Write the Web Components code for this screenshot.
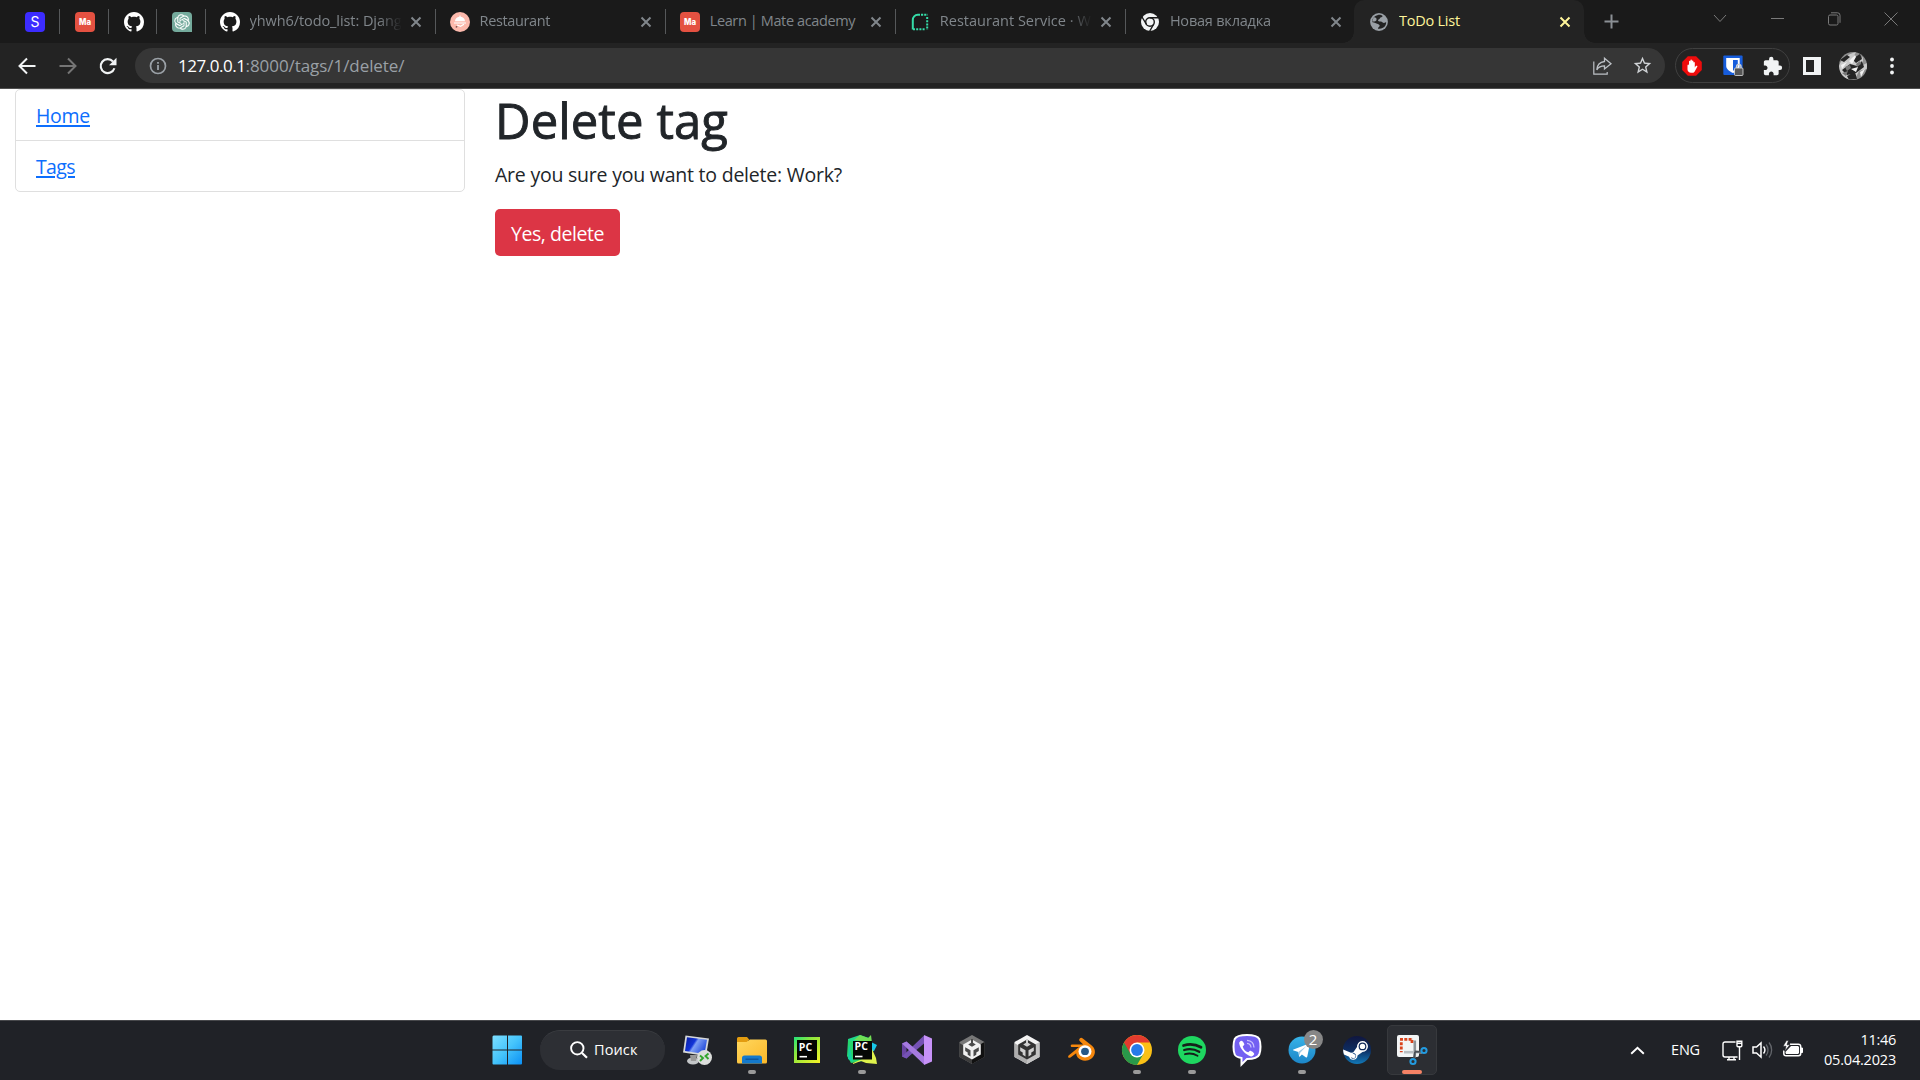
<!DOCTYPE html>
<html lang="ru">
<head>
<meta charset="utf-8">
<title>ToDo List</title>
<style>
html,body{margin:0;height:100%;overflow:hidden;background:#fff}
body{font-family:"Open Sans","Noto Sans",sans-serif}
</style>
</head>
<body>
<desktop-screen>
  <tab-strip slot="tabs">
    <browser-tab pinned icon="s" style="width:50px"></browser-tab>
    <browser-tab pinned icon="mate" style="width:49px"></browser-tab>
    <browser-tab pinned icon="github" style="width:48px"></browser-tab>
    <browser-tab pinned icon="openai" style="width:49px"></browser-tab>
    <browser-tab icon="github"><ui-text w="152" size="14.5">yhwh6/todo_list: Djang</ui-text></browser-tab>
    <browser-tab icon="restaurant"><ui-text w="70.5" size="14.5">Restaurant</ui-text></browser-tab>
    <browser-tab icon="mate"><ui-text w="145.5" size="14.5">Learn | Mate academy</ui-text></browser-tab>
    <browser-tab icon="service"><ui-text w="151" size="14.5">Restaurant Service · W</ui-text></browser-tab>
    <browser-tab icon="chromeTab" nosep><ui-text w="101" size="14.5">Новая вкладка</ui-text></browser-tab>
    <browser-tab active icon="globe"><ui-text w="61" size="14.5">ToDo List</ui-text></browser-tab>
  </tab-strip>
  <address-bar slot="toolbar"></address-bar>
  <web-page slot="page"></web-page>
  <task-bar slot="taskbar"></task-bar>
</desktop-screen>

<script>
const svg = (w, h, body, vb) => `<svg width="${w}" height="${h}" viewBox="${vb || `0 0 ${w} ${h}`}" fill="none">${body}</svg>`;
const OCTO = 'M8 0C3.58 0 0 3.58 0 8c0 3.54 2.29 6.53 5.47 7.59.4.07.55-.17.55-.38 0-.19-.01-.82-.01-1.49-2.01.37-2.53-.49-2.69-.94-.09-.23-.48-.94-.82-1.13-.28-.15-.68-.52-.01-.53.63-.01 1.08.58 1.23.82.72 1.21 1.87.87 2.33.66.07-.52.28-.87.51-1.07-1.78-.2-3.64-.89-3.64-3.95 0-.87.31-1.59.82-2.15-.08-.2-.36-1.02.08-2.12 0 0 .67-.21 2.2.82.64-.18 1.32-.27 2-.27.68 0 1.36.09 2 .27 1.53-1.04 2.2-.82 2.2-.82.44 1.1.16 1.92.08 2.12.51.56.82 1.27.82 2.15 0 3.07-1.87 3.75-3.65 3.95.29.25.54.73.54 1.48 0 1.07-.01 1.93-.01 2.2 0 .21.15.46.55.38A8.013 8.013 0 0016 8c0-4.42-3.58-8-8-8z';
const KNOT = 'M22.2819 9.8211a5.9847 5.9847 0 0 0-.5157-4.9108 6.0462 6.0462 0 0 0-6.5098-2.9A6.0651 6.0651 0 0 0 4.9807 4.1818a5.9847 5.9847 0 0 0-3.9977 2.9 6.0462 6.0462 0 0 0 .7427 7.0966 5.98 5.98 0 0 0 .511 4.9107 6.051 6.051 0 0 0 6.5146 2.9001A5.9847 5.9847 0 0 0 13.2599 24a6.0557 6.0557 0 0 0 5.7718-4.2058 5.9894 5.9894 0 0 0 3.9977-2.9001 6.0557 6.0557 0 0 0-.7475-7.0729zm-9.022 12.6081a4.4755 4.4755 0 0 1-2.8764-1.0408l.1419-.0804 4.7783-2.7582a.7948.7948 0 0 0 .3927-.6813v-6.7369l2.02 1.1686a.071.071 0 0 1 .038.052v5.5826a4.504 4.504 0 0 1-4.4945 4.4944zm-9.6607-4.1254a4.4708 4.4708 0 0 1-.5346-3.0137l.142.0852 4.783 2.7582a.7712.7712 0 0 0 .7806 0l5.8428-3.3685v2.3324a.0804.0804 0 0 1-.0332.0615L9.74 19.9502a4.4992 4.4992 0 0 1-6.1408-1.6464zM2.3408 7.8956a4.485 4.485 0 0 1 2.3655-1.9728V11.6a.7664.7664 0 0 0 .3879.6765l5.8144 3.3543-2.0201 1.1685a.0757.0757 0 0 1-.071 0l-4.8303-2.7865A4.504 4.504 0 0 1 2.3408 7.872zm16.5963 3.8558L13.1038 8.364 15.1192 7.2a.0757.0757 0 0 1 .071 0l4.8303 2.7913a4.4944 4.4944 0 0 1-.6765 8.1042v-5.6772a.79.79 0 0 0-.407-.667zm2.0107-3.0231l-.142-.0852-4.7735-2.7818a.7759.7759 0 0 0-.7854 0L9.409 9.2297V6.8974a.0662.0662 0 0 1 .0284-.0615l4.8303-2.7866a4.4992 4.4992 0 0 1 6.6802 4.66zM8.3065 12.863l-2.02-1.1638a.0804.0804 0 0 1-.038-.0567V6.0742a4.4992 4.4992 0 0 1 7.3757-3.4537l-.142.0805L8.704 5.459a.7948.7948 0 0 0-.3927.6813zm1.0976-2.3654l2.602-1.4998 2.6069 1.4998v2.9994l-2.5974 1.4997-2.6067-1.4997Z';
/* Hexagonal cube mark: top, right and left hull faces, then the inner cube with its panels and notches. */
const cube = (a, b, c, line, face) => `
  <path d="M15 1 27.500 8v15L15 30 2.500 23V8z" fill="${a}"/><path d="M15 15 27.500 8v15L15 30z" fill="${b}"/><path d="M15 17 2.500 9v14l12.500 7z" fill="${c}"/>
  <path d="M15 5.500 23.800 10.500v10L15 25.500l-8.800-5v-10z" fill="${line}"/>
  <path d="M14 5h2v3.800l2.800 1.700L15 12.700l-3.800-2.200L14 8.800z" fill="${face}"/>
  <path d="M8.200 13.300 13.500 16.200v6.200l-2.800-1.600v-2.400l-2.500-1.400zM21.800 13.300 16.500 16.200v6.200l2.800-1.600v-2.400l2.500-1.400z" fill="${face}"/>`;

const ICONS = {
  s: svg(20,20,`<rect width="20" height="20" rx="4" fill="#3c2cff"/><text x="10" y="15" text-anchor="middle" font-family="Inter,sans-serif" font-size="14" fill="#fff">S</text>`),
  mate: svg(20,20,`<rect width="20" height="20" rx="4" fill="#e45141"/><text x="4" y="13.200" textLength="12" lengthAdjust="spacingAndGlyphs" font-family="Inter,sans-serif" font-weight="800" font-size="8.500" fill="#fff">Ma</text>`),
  github: svg(20,20,`<path d="${OCTO}" fill="#fff"/>`,'0 0 16 16'),
  openai: svg(20,20,`<path d="M4 0h12a4 4 0 0 1 4 4v16H4a4 4 0 0 1-4-4V4a4 4 0 0 1 4-4z" fill="#74aa9c"/><g transform="translate(2.200 2.200) scale(.65)"><path d="${KNOT}" fill="#fff" stroke="#fff" stroke-width=".2"/></g>`),
  restaurant: svg(20,20,`<circle cx="10" cy="10" r="10" fill="#fcb9ac"/><path d="M5 9.200a5 4.400 0 0 1 10 0z" fill="#fff"/><circle cx="10" cy="4.200" r=".8" fill="#fff"/><path d="M4 10.500h12v1H4z" fill="#fff"/><path d="M7 13l3.500 1.300 3.500-2" stroke="#fff" stroke-width="1.200"/><path d="M5.500 14.700l1.500-.8.500 1.200-1.500.6z" fill="#5b3b3b"/>`),
  service: svg(20,20,`<path d="M2.800 17.500V8a5 5 0 0 1 5-5.200H10" stroke="#35dca8" stroke-width="2"/><path d="M11 2.800h6.800" stroke="#35dca8" stroke-width="2" stroke-dasharray="2.200 1"/><path d="M17.200 5v13M3 17.300h12.500" stroke="#35dca8" stroke-width="2" stroke-dasharray="2 1.200"/>`),
  chromeTab: svg(20,20,`<circle cx="10" cy="10" r="9" fill="#f1f3f4"/><circle cx="10" cy="10" r="4.300" stroke="#1a1a1a" stroke-width="1.400"/><path d="M10 5.700h8.500M6.300 12.200 2 5M13.700 12.200 9.500 19.500" stroke="#1a1a1a" stroke-width="1.400"/>`),
  globe: svg(20,20,`<circle cx="10" cy="10" r="8.900" fill="#9aa0a6"/><path d="M9 2.900c2-.2 3.700.2 4.700 1.100-.4 1.500-2.300 1-2.800 2.300-.3 1.200-1.700 1-1.900 2-.1 1 1.100 1.200 2.800 1.300 1.500.2 1.600 1.300 3.300 1.300.8-.2 1.400-.7 2.100-.5-.1 2.300-1.400 4.300-3.300 5.400-1.500.9-3.400 1.300-4.900.9-.4-1.300 1.700-1.600 1.700-2.900 0-1.500-1.500-1.700-2.600-2.100C6.500 11 4.800 10.400 3 10c0-3 2-6.400 6-7.100z" fill="#232323"/><path d="M4.500 5.500C6 5 8 6 7.500 8 7 9.500 5 9.700 3 9.500z" fill="#9aa0a6"/>`),
  x: svg(12,12,`<path d="M1.500 1.500l9 9m0-9l-9 9" stroke="currentColor" stroke-width="2"/>`),
  plus: svg(15,15,`<path d="M7.500 .5v14M.5 7.500h14" stroke="#8b9095" stroke-width="2"/>`),
  winChevron: svg(14,9,`<path d="M1 1l6 6.500L13 1" stroke="#7a7a7a"/>`),
  winMin: svg(13,3,`<path d="M0 1.500h13" stroke="#7a7a7a"/>`),
  winMax: svg(13,14,`<rect x=".5" y="3" width="9.500" height="10" rx="1.500" stroke="#7a7a7a"/><path d="M3 .8h6.500a2.500 2.500 0 0 1 2.500 2.500v7.500" stroke="#7a7a7a"/>`),
  winClose: svg(14,14,`<path d="M.5 .5l13 13m0-13l-13 13" stroke="#7a7a7a"/>`),
  back: svg(18,18,`<path d="M17.500 9H2M9 1.500 1.500 9 9 16.500" stroke="#f1f3f4" stroke-width="2"/>`),
  forward: svg(18,18,`<path d="M.5 9H16M9 1.500 16.500 9 9 16.500" stroke="#757575" stroke-width="2"/>`),
  reload: svg(18,18,`<path d="M15.400 11.200A7 7 0 1 1 14 4.500" stroke="#f1f3f4" stroke-width="2.100"/><path d="M17.500.8v7.400h-7.400z" fill="#f1f3f4"/>`),
  info: svg(18,18,`<circle cx="9" cy="9" r="7.500" stroke="#9aa0a6" stroke-width="1.700"/><path d="M9 8v5M9 5v1.700" stroke="#9aa0a6" stroke-width="1.800"/>`),
  share: svg(19,18,`<path d="M.8 4.500v12.700h13.400V15" stroke="#bdc1c6" stroke-width="1.200"/><path d="M11.500 1.200l6.500 5.500-6.500 5.300V8.900c-3.600 0-6 1-7.700 3.900.3-4.500 3.200-7.700 7.700-8.300z" stroke="#bdc1c6" stroke-width="1.300"/>`),
  star: svg(21,21,`<path d="M22 9.240l-7.190-.62L12 2 9.190 8.630 2 9.240l5.460 4.730L5.820 21 12 17.270 18.180 21l-1.630-7.030L22 9.240zM12 15.400l-3.760 2.270 1-4.280-3.320-2.880 4.380-.38L12 6.100l1.710 4.040 4.380.38-3.320 2.880 1 4.280L12 15.400z" fill="#d0d3d6"/>`,'0 0 24 24'),
  block: svg(20,20,`<path d="M5.900.2h8.200L19.800 5.900v8.200l-5.700 5.700H5.900L.2 14.100V5.900z" fill="#ee0c0c"/><path d="M5.500 9.500c0-1.200 1.500-1.200 1.500 0V5.400c0-1 1.400-1 1.400 0V4.200c0-1 1.500-1 1.500 0v1.100c0-1 1.500-1 1.500 0v1.400c0-.9 1.400-.9 1.400 0v4.800l1-1.400c.8-1 2-.2 1.500.7l-2.600 4.700c-.5.900-1.200 1.300-2.100 1.300H9c-2 0-3.500-1.300-3.500-3.200z" fill="#fff"/>`),
  warden: svg(20,21,`<rect x=".3" y=".5" width="19.300" height="19.500" rx="1" fill="#175ddc"/><path d="M3.200 3h13.500v8c0 3.500-3.700 5.500-6.700 7-3-1.500-6.800-3.500-6.800-7z" fill="#fff"/><path d="M10 5h4.800v6c0 2-2.600 3.600-4.800 4.800z" fill="#175ddc"/><rect x="11.500" y="13" width="8.500" height="7.500" rx="1" fill="#555" stroke="#ddd" stroke-width=".8"/><path d="M13.600 13v-1.200a2.200 2.200 0 0 1 4.400 0V13" stroke="#ccc" stroke-width="1.500"/>`),
  puzzle: svg(20,20,`<path d="M20.500 11H19V7c0-1.100-.9-2-2-2h-4V3.500a2.500 2.500 0 0 0-5 0V5H4c-1.100 0-1.990.9-1.990 2v3.800H3.500c1.490 0 2.700 1.210 2.700 2.700s-1.210 2.700-2.700 2.700H2V20c0 1.100.9 2 2 2h3.800v-1.500c0-1.490 1.210-2.700 2.700-2.700 1.490 0 2.700 1.210 2.700 2.700V22H17c1.100 0 2-.9 2-2v-4h1.500a2.500 2.500 0 0 0 0-5z" fill="#f1f3f4"/>`,'1 0 23 23'),
  panel: svg(18,18,`<path d="M0 0h18v18H0zM3 3v12h8V3z" fill="#f1f3f4" fill-rule="evenodd"/>`),
  avatar: svg(28,28,`<defs><clipPath id="c"><circle cx="14" cy="14" r="14"/></clipPath></defs><g clip-path="url(#c)"><rect width="28" height="28" fill="#8e8e8e"/><path d="M0 14C4 4 10 2 17 0l-3 6 6-3-4 7 8-5v8l4-2v6l-8 2-4 8-6 3-8-4z" fill="#c9c9c9"/><path d="M1 8l7-5 3 2-6 5zM13 7l8-5 2 5-6 4zM3 18l8-6 7 2 5-5 2 6-8 6-9 2zM8 24l8-4 2 7-8 1z" fill="#252525"/><path d="M10 9l6-6 1 2-4 7zM12 17l7-2-2 5zM2 13l6-3-5 7zM21 20l5-3-4 8z" fill="#f2f2f2"/><path d="M6 15l5-2 1 3-4 3zM17 12l4-3 1 3-4 3zM3 21l6-2-2 5z" fill="#777"/></g>`),
  menu: svg(4,18,`<circle cx="2" cy="2.500" r="1.900" fill="#f1f3f4"/><circle cx="2" cy="9" r="1.900" fill="#f1f3f4"/><circle cx="2" cy="15.500" r="1.900" fill="#f1f3f4"/>`),

  windows: svg(30,30,`<defs><linearGradient id="w" x1="0" y1="0" x2="30" y2="30" gradientUnits="userSpaceOnUse"><stop stop-color="#7fe0ff"/><stop offset=".5" stop-color="#45c4fb"/><stop offset="1" stop-color="#0a8ff5"/></linearGradient></defs><path d="M1.500.5H15v14H.5v-13zM16 .5h13a1 1 0 0 1 1 1v13H16zM.5 15.500H15v14H1.500a1 1 0 0 1-1-1zM16 15.500h14v13a1 1 0 0 1-1 1H16z" fill="url(#w)"/>`),
  search: svg(18,18,`<circle cx="7.300" cy="7.300" r="6.200" fill="none" stroke="#fff" stroke-width="1.900"/><path d="M12 12l5 4.800" stroke="#fff" stroke-width="2.200"/>`),
  rdp: svg(30,32,`<defs><linearGradient id="r" x1="0" y1="0" x2="1" y2=".5"><stop stop-color="#0a1d9c"/><stop offset=".45" stop-color="#1234d8"/><stop offset=".55" stop-color="#7fa0f5"/><stop offset="1" stop-color="#2850dc"/></linearGradient></defs><ellipse cx="11" cy="27" rx="6" ry="3.500" fill="#c3c6c8"/><path d="M8 21h7l-1 6H9z" fill="#999"/><path d="M3.500 1.500 27 4.500 24 22 1 18.500z" fill="#d5d8da"/><path d="M5 3.200 25 5.800 22.500 20 3 17z" fill="url(#r)"/><circle cx="22.500" cy="23.500" r="7.500" fill="#dcdedc"/><path d="M18 21.500l3 2.500-3 3M26.500 19.500l-3 2.500 3 3" stroke="#32a52c" stroke-width="1.900"/>`),
  explorer: svg(30,28,`<defs><linearGradient id="e" x1="0" y1="0" x2="1" y2="1"><stop stop-color="#ffd75e"/><stop offset="1" stop-color="#fbb829"/></linearGradient></defs><path d="M0 2.500A1.500 1.500 0 0 1 1.500 1h8.500l3 3.500h-2V10H0z" fill="#e39c10"/><path d="M0 6h9.500l3.500-2.500h15.500A1.500 1.500 0 0 1 30 5v21a1.500 1.500 0 0 1-1.500 1.500h-27A1.500 1.500 0 0 1 0 26z" fill="url(#e)"/><path d="M5 27.500V22a2.500 2.500 0 0 1 2.500-2.500h15A2.500 2.500 0 0 1 25 22v5.500z" fill="#1479cc"/><path d="M8.500 23.200h13" stroke="#0a4f94" stroke-width="1.200"/>`),
  pycharm: svg(28,28,`<defs><linearGradient id="p" x1="0" y1="0" x2="1" y2="1"><stop stop-color="#21e37b"/><stop offset=".35" stop-color="#8be63e"/><stop offset="1" stop-color="#f8f226"/></linearGradient></defs><path d="M1 1h26v26H1z" fill="url(#p)"/><path d="M4 4h20v20H4z" fill="#030303"/><text x="5.800" y="14.500" font-family="Open Sans,sans-serif" font-weight="700" font-size="10.500" textLength="13.500" fill="#fff">PC</text><path d="M6.500 20.700h7.500" stroke="#fff" stroke-width="1.600"/>`),
  pycharmce: svg(32,32,`<path d="M2 5 14 1l9 3v6l-5 6-16 2z" fill="#20d98a"/><path d="M2 6 1 22l4 7 12-2 6-14z" fill="#25d56c"/><path d="M8 6l6-5 8 3 3-3 1 8z" fill="#70df54"/><path d="M25 8l6 3-3 6-3 1z" fill="#18c7e8"/><path d="M6 20l1 9 9-4 10-10 4 9 1 6-11-1-5-2-8 3z" fill="#dff24c"/><path d="M3 10l4 18-5-3z" fill="#15cfa0"/><path d="M7 7h19v18.500H7z" fill="#050805"/><text x="8.500" y="16" font-family="Open Sans,sans-serif" font-weight="700" font-size="10.500" textLength="13.500" fill="#fff">PC</text><path d="M9 22.500h7.500" stroke="#fff" stroke-width="1.600"/>`),
  vs: svg(30,30,`<path d="M0 8.500 4.500 6.500 13 14l-8.500 9.500L0 21.500z" fill="#6a45a4"/><path d="M4.500 10.500 9 15l-4.500 4.500z" fill="#202227"/><path d="M0 21.500 22 .5v8L4.500 23.500z" fill="#7552b5"/><path d="M0 8.500 4.500 6.500 22 21.500v8z" fill="#a67ae0"/><path d="M22 0l8 3.500v23L22 30z" fill="#c792f8"/>`),
  unityDark: svg(30,32,cube('#777','#111','#3c3c3c','#f0f0f0','#4a4a4a')),
  unity: svg(30,32,cube('#f4f4f4','#c3c3c3','#aeaeae','#333','#d0d0d0')),
  blender: svg(30,26,`<path d="M12.800 1.500c1-1 2-.7 3 .1l9.200 7.200c4.500 4 3.500 10-.8 13-4.200 3-10.500 2.300-13.500-1.300-1-1.300-1.500-2.700-1.500-4.200l-5.700 4.200c-2 1.200-3.300-1-1.600-2.300L12 10H5.200c-2 0-2-2.600 0-2.600h11L12.900 4.200c-1-.8-.9-1.800-.1-2.700z" fill="#f5870d"/><ellipse cx="18" cy="14.400" rx="6.500" ry="6.200" fill="#fff"/><ellipse cx="18" cy="14.400" rx="3.900" ry="3.700" fill="#265787"/>`),
  chrome: svg(30,30,`<circle cx="15" cy="15" r="15" fill="#fbc116"/><path d="M2 7.500A15 15 0 0 0 15 30l6.500-11.300L15 15z" fill="#29994a"/><path d="M2 7.500a15 15 0 0 1 26 0H15l-6.500 11.200z" fill="#e33b2e"/><circle cx="15" cy="15" r="7.500" fill="#fff"/><circle cx="15" cy="15" r="5.900" fill="#277ae8"/>`),
  spotify: svg(28,28,`<circle cx="14" cy="14" r="14" fill="#1ed760"/><g stroke="#15201a" stroke-linecap="round"><path d="M5.500 9.500c5.500-1.600 12.500-1 17.500 1.800" stroke-width="2.700"/><path d="M6.200 14c5-1.400 10.500-.8 15 1.800" stroke-width="2.300"/><path d="M7 18.200c4-1.100 8.500-.7 12.500 1.600" stroke-width="1.900"/></g>`),
  viber: svg(30,32,`<path d="M15 1c8 0 11 1.500 12.300 4 1.600 4 1.600 11.500 0 15.500-1.300 3-5 4.500-12.300 4.500l-5.500 5.500V24C5 23.200 3.300 22 2.700 20.500c-1.600-4-1.600-11.500 0-15.500C4 2.500 7 1 15 1z" fill="#7360f2" stroke="#fff" stroke-width="2"/><path d="M9 6.800c1.300-.8 3.700 3 3.300 3.900-.3.800-1.500 1-1.500 1.800.6 2.800 2.700 5 5.300 5.700.9.100 1.100-1.300 2-1.500 1-.2 4.700 2.400 4.100 3.600-.6 1.400-2 2.300-3.300 2.100C13 20.300 8.500 15.300 7.200 9.500 7 8.300 8 7.400 9 6.800z" fill="#fff"/><path d="M15 9.300c2.500.2 3.800 1.700 4 4.200M15 6.300c4.300.3 6.800 2.800 7 7.200" stroke="#c9c1ff" stroke-width="1.300"/>`),
  telegram: svg(28,28,`<defs><linearGradient id="t" x1="0" y1="0" x2="0" y2="1"><stop stop-color="#37b3e8"/><stop offset="1" stop-color="#1c86c8"/></linearGradient></defs><circle cx="14" cy="14" r="13.500" fill="url(#t)"/><path d="M5.500 13.500 20.500 7.800c.8-.3 1.300.2 1.200 1l-2.400 11.800c-.2.900-.9 1.100-1.600.6l-3.800-2.800-2 2c-.5.400-.8.300-.9-.4l-.6-4-4.700-1.400c-.9-.3-.9-.8-.2-1.100z" fill="#fff"/><path d="M10.500 15.800 18.500 10l-6.300 6.700-.6 3.300z" fill="#9fcbe6"/>`),
  steam: svg(28,28,`<defs><linearGradient id="st" x1="0" y1="0" x2="0" y2="1"><stop stop-color="#10163f"/><stop offset=".5" stop-color="#0d2c60"/><stop offset="1" stop-color="#1279b8"/></linearGradient></defs><circle cx="14" cy="14" r="14" fill="url(#st)"/><path d="M.1 13.500 8 16.800l2.200-.3 3.800-5.500a5.500 5.500 0 1 1 5.500 5l-5 3.600a4.300 4.300 0 0 1-8.400 1.200L1 18.500a14 14 0 0 1-.9-5z" fill="#fff"/><circle cx="19.500" cy="10.400" r="3.900" fill="#10295a"/><circle cx="19.500" cy="10.400" r="2.700" fill="#fff"/><path d="M7.800 21.200a2.800 2.800 0 1 0 1.600-4l2 1a2 2 0 0 1-1.600 3.700z" fill="#10447f"/>`),
  snip: svg(32,32,`<rect x="1" y="1" width="22" height="22" rx="2" fill="#f3f5f6"/><path d="M4 5.300h13" stroke="#d9431c" stroke-width="2.800" stroke-dasharray="3 1.300"/><path d="M5.300 8.300v10M16 6v4" stroke="#d9431c" stroke-width="2.800" stroke-dasharray="3 1.300"/><path d="M18.800 6.500v17" stroke="#8e9499" stroke-width="2.600"/><path d="M8 18.200h18" stroke="#b9bec2" stroke-width="2.600"/><path d="M18.500 17.500l7 .3M19 18l-1 6" stroke="#4a5158" stroke-width="1.800"/><circle cx="28" cy="16.500" r="2.600" stroke="#239be0" stroke-width="2"/><circle cx="17" cy="27.500" r="2.600" stroke="#239be0" stroke-width="2"/>`),
  trayUp: svg(15,9,`<path d="M1.200 7.800l6.300-6 6.300 6" stroke="#fff" stroke-width="1.900"/>`),
  net: svg(21,21,`<path d="M13.500 2H3a2 2 0 0 0-2 2v11a2 2 0 0 0 2 2h12.500" stroke="#fff" stroke-width="1.400"/><path d="M5 19.800h9M7 17v2.500M12 17v2.500" stroke="#fff" stroke-width="1.400"/><path d="M15 1.200h4.800v4.500a1 1 0 0 1-1 1H16a1 1 0 0 1-1-1zM17.500 7v13M15 3.200h5" stroke="#fff" stroke-width="1.400"/>`),
  sound: svg(21,18,`<path d="M1 6h3.500L9 2v14l-4.500-4H1z" stroke="#fff" stroke-width="1.500"/><path d="M11.500 5.500a5.500 5.500 0 0 1 0 7" stroke="#fff" stroke-width="1.400"/><path d="M14 3.500a8.500 8.500 0 0 1 0 11M17 1.500a12 12 0 0 1 0 15" stroke="#63666b" stroke-width="1.300"/>`),
  battery: svg(22,18,`<path d="M8 3.200h8.500A2.200 2.200 0 0 1 18.700 5.400v7.200a2.200 2.200 0 0 1-2.200 2.200H4a2.200 2.200 0 0 1-2.200-2.200v-3" stroke="#fff" stroke-width="1.500"/><path d="M19 7h1.500v4.500H19z" fill="#fff" stroke="#fff"/><path d="M9 5H16l1 1v6l-1 1H4l-.6-2z" fill="#fff"/><path d="M4.500-.5 1 5.200h3L2.800 10 8 3.800H5L6.500-.5z" fill="#fff" stroke="#202227" stroke-width=".6"/>`)
};

const define = (name, html, setup) => {
  const tpl = document.createElement('template');
  tpl.innerHTML = html;
  customElements.define(name, class extends HTMLElement {
    connectedCallback() {
      if (this.shadowRoot) return;
      this.attachShadow({ mode: 'open' }).append(tpl.content.cloneNode(true));
      if (setup) setup(this, this.shadowRoot);
    }
  });
};

define('desktop-screen', `<style>
:host{display:grid;grid-template-rows:43px 46px 931px 60px;width:1920px;height:1080px;overflow:hidden}
</style><slot name="tabs"></slot><slot name="toolbar"></slot><slot name="page"></slot><slot name="taskbar"></slot>`);

define('tab-strip', `<style>
:host{display:flex;background:#1a1a1a;padding-left:9.500px;box-sizing:border-box;overflow:hidden}
.new{padding:14px 0 0 20px}
.win{margin-left:auto;display:flex}
.win span{width:57.200px;height:37px;display:flex;align-items:center;justify-content:center}
</style><slot></slot><ui-icon class="new" name="plus"></ui-icon>
<div class="win"><span><ui-icon name="winChevron"></ui-icon></span><span><ui-icon name="winMin"></ui-icon></span><span><ui-icon name="winMax"></ui-icon></span><span><ui-icon name="winClose"></ui-icon></span></div>`);

define('browser-tab', `<style>
:host{display:flex;align-items:center;width:230.100px;height:43px;flex:none;box-sizing:border-box;padding-left:14px;color:#80868b;background:linear-gradient(#56585a,#56585a) right 0 top 9px/1px 25px no-repeat}
:host([pinned]){padding-left:15px}
:host([nosep]){background:none;width:228px}
:host([active]){position:relative;color:#fff59a;background:#232323;border-radius:10px 10px 0 0;width:230px;padding-left:15px}
:host([active])::before,:host([active])::after{content:"";position:absolute;bottom:0;left:-11px;width:11px;height:11px;background:radial-gradient(circle at 0 0,transparent 10.500px,#232323 11px)}
:host([active])::after{left:auto;right:-11px;background:radial-gradient(circle at 100% 0,transparent 10.500px,#232323 11px)}
.label{margin-left:10px;width:152px;overflow:hidden;display:flex;padding-bottom:1.500px}
:host(:not([active])) .label{-webkit-mask:linear-gradient(90deg,#000 128px,transparent 152px)}
:host(.plain) .label{-webkit-mask:none}
.x{margin-left:8px}
:host([pinned]) .label,:host([pinned]) .x{display:none}
</style><ui-icon></ui-icon><div class="label"><slot></slot></div><ui-icon class="x" name="x"></ui-icon>`,
  (el, root) => {
    root.querySelector('ui-icon').setAttribute('name', el.getAttribute('icon'));
    if (el.getAttribute('icon') === 'mate') el.classList.add('plain');
  });

define('address-bar', `<style>
:host{display:flex;align-items:center;background:#232323;border-bottom:1px solid #505050;box-sizing:border-box;height:46px;padding:0 26px 0 18px}
.nav{display:flex;gap:22.500px;width:117px}
.omni{display:flex;align-items:center;width:1530px;height:35px;border-radius:18px;background:#363636;box-sizing:border-box;padding:0 12.500px 0 14px}
.url{display:flex;margin-left:11px;color:#9aa0a6}
.host{color:#fff}
.end{margin-left:auto;display:flex;align-items:center;gap:20px}
.ext{display:flex;align-items:center;justify-content:space-between;width:115px;height:35px;border:1px solid #404040;border-radius:18px;box-sizing:border-box;padding:0 6px;margin:0 13px 0 10px}
.av{margin:0 23px 0 18px}
</style>
<div class="nav"><ui-icon name="back"></ui-icon><ui-icon name="forward"></ui-icon><ui-icon name="reload"></ui-icon></div>
<div class="omni"><ui-icon name="info"></ui-icon><div class="url"><ui-text class="host" w="67.500" size="17">127.0.0.1</ui-text><ui-text w="159" size="17">:8000/tags/1/delete/</ui-text></div>
<div class="end"><ui-icon name="share"></ui-icon><ui-icon name="star"></ui-icon></div></div>
<div class="ext"><ui-icon name="block"></ui-icon><ui-icon name="warden"></ui-icon><ui-icon name="puzzle"></ui-icon></div>
<ui-icon name="panel"></ui-icon><ui-icon class="av" name="avatar"></ui-icon><ui-icon name="menu"></ui-icon>`);

define('nav-list', `<style>
:host{display:flex;flex-direction:column;width:450px;height:103px;box-sizing:border-box;border:1px solid #dfdfdf;border-radius:5px}
a{color:#0d6efd;height:50px;box-sizing:border-box;padding:2px 20px 0;display:flex;align-items:center;text-decoration:none}
a+a{border-top:1px solid #dfdfdf;height:51px;padding-top:3px}
ui-text{text-decoration:underline;text-decoration-thickness:2px;text-underline-offset:1.500px}
</style><a href="#"><ui-text w="54" size="19.500">Home</ui-text></a><a href="#"><ui-text w="39" size="19.500">Tags</ui-text></a>`);

define('web-page', `<style>
:host{display:flex;gap:30px;padding:0 15px;background:#fff;color:#212529;box-sizing:border-box;height:931px}
main{display:flex;flex-direction:column;align-items:flex-start;padding-top:1px}
h1{margin:0;font-weight:500;height:60px;display:flex;align-items:center;-webkit-text-stroke:.9px #212529}
p{margin:10px 0 19px;height:30px;display:flex;align-items:center}
button{width:125px;height:47px;border:0;border-radius:5px;background:#dc3545;color:#fff;padding:3px 0 0;display:flex;align-items:center;justify-content:center;font-family:inherit}
</style><nav-list></nav-list><main><h1><ui-text w="233" size="49">Delete tag</ui-text></h1><p><ui-text w="347" size="19.500">Are you sure you want to delete: Work?</ui-text></p><button><ui-text w="93" size="19.500">Yes, delete</ui-text></button></main>`);

define('task-app', `<style>
:host{display:flex;width:55px;height:60px;position:relative;align-items:center;justify-content:center;flex:none;box-sizing:border-box;padding-bottom:3px}
i{display:none;position:absolute;bottom:7px;left:23.500px;width:8px;height:4px;border-radius:2px;background:#9a9a9a}
:host([open]) i{display:block}
:host([current]){width:50px;height:50px;margin:4px 0 0 2.500px;padding-bottom:1px;border:1px solid #37393d;border-radius:5px;background:#2c2e33}
:host([current]) i{display:block;width:20px;bottom:0;left:14px;background:#f58265}
b{display:none;position:absolute;left:29px;top:9px;width:19px;height:19px;border-radius:50%;background:#878787;color:#fff;font-weight:400;align-items:center;justify-content:center}
:host([badge]) b{display:flex}
</style><ui-icon></ui-icon><i></i><b></b>`,
  (el, root) => {
    root.querySelector('ui-icon').setAttribute('name', el.getAttribute('name'));
    if (el.hasAttribute('badge')) root.querySelector('b').innerHTML = `<ui-text size="15">${el.getAttribute('badge')}</ui-text>`;
  });

define('task-bar', `<style>
:host{display:flex;background:#202227;border-top:1px solid #47484b;box-sizing:border-box;height:60px;color:#fff;padding-left:492px}
.start{padding-top:14px}
.search{display:flex;align-items:center;width:125px;height:40px;border-radius:20px;background:#2d2f34;border-top:1px solid #3a3c40;box-sizing:border-box;margin:9px 4.500px 0 18px;padding:0 0 1px 30px;gap:6px}
.apps{display:flex;height:59px;align-items:flex-start}
.tray{margin-left:auto;display:flex;align-items:center;height:58px;padding-right:24px}
.clock{display:flex;flex-direction:column;align-items:flex-end;margin-left:20px}
</style>
<ui-icon class="start" name="windows"></ui-icon>
<div class="search"><ui-icon name="search"></ui-icon><ui-text w="43.500" size="14.500">Поиск</ui-text></div>
<div class="apps"><task-app name="rdp"></task-app><task-app name="explorer" open></task-app><task-app name="pycharm"></task-app><task-app name="pycharmce" open></task-app><task-app name="vs"></task-app><task-app name="unityDark"></task-app><task-app name="unity"></task-app><task-app name="blender"></task-app><task-app name="chrome" open></task-app><task-app name="spotify" open></task-app><task-app name="viber"></task-app><task-app name="telegram" open badge="2"></task-app><task-app name="steam"></task-app><task-app name="snip" current></task-app></div>
<div class="tray"><ui-icon name="trayUp"></ui-icon><ui-text style="margin:0 22px 0 26px" w="29" size="14.500">ENG</ui-text><ui-icon name="net"></ui-icon><ui-icon style="margin:0 9px" name="sound"></ui-icon><ui-icon name="battery"></ui-icon>
<div class="clock"><ui-text w="35.500" size="14.500">11:46</ui-text><ui-text w="72" size="14.500">05.04.2023</ui-text></div></div>`);

/* Icons and labels come last: their hosts set names and fonts before they are upgraded. */
define('ui-icon', `<style>:host{display:inline-flex;flex:none}svg{display:block;overflow:visible}</style>`,
  (el, root) => { root.innerHTML += ICONS[el.getAttribute('name')]; });

/* Single-line label; "w" is its set width, reached by tracking. */
define('ui-text', `<style>:host{display:inline-block;white-space:pre;flex:none;line-height:1.360}</style><slot></slot>`,
  el => {
    el.style.fontSize = el.getAttribute('size') + 'px';
    const w = parseFloat(el.getAttribute('w'));
    if (w) el.style.letterSpacing = (w - el.getBoundingClientRect().width) / el.textContent.length + 'px';
  });
</script>
</body>
</html>
